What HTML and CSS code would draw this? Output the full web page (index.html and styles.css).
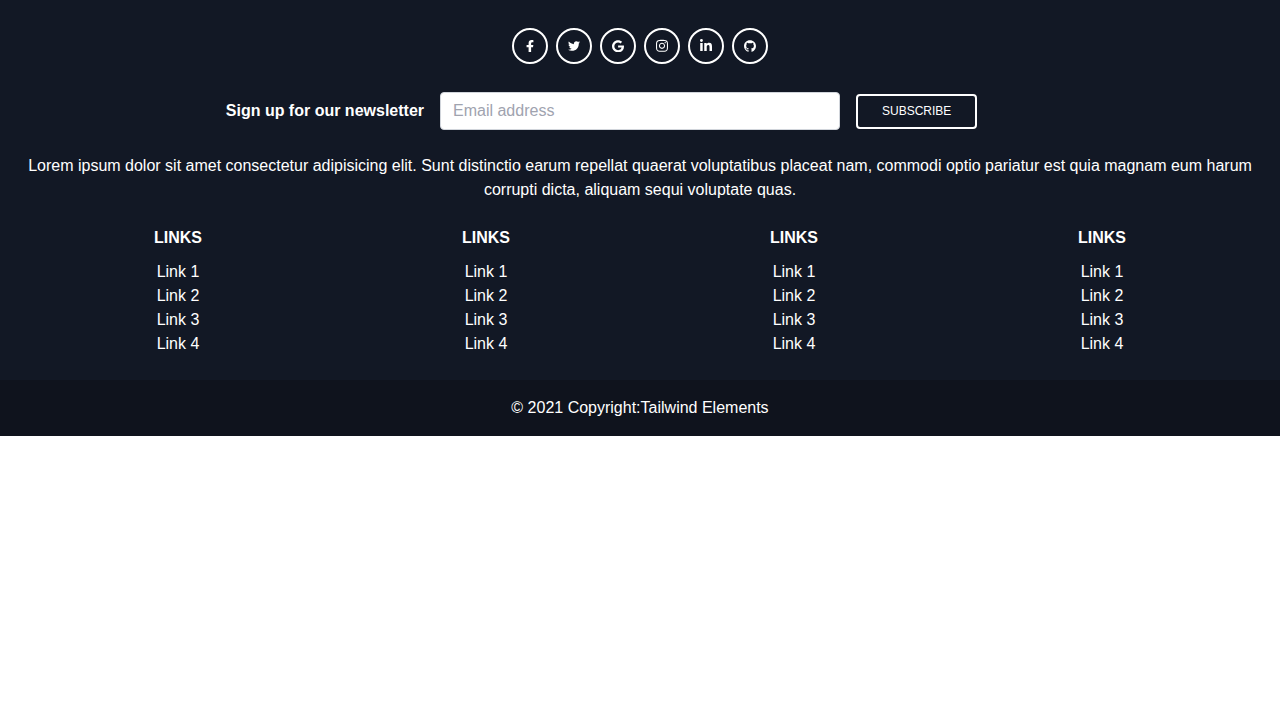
FILE: index.html
```html
<!DOCTYPE html>
<html lang="en">
<head>
<meta charset="utf-8">
<title>Footer</title>
<link rel="stylesheet" href="styles.css">
</head>
<body>
<footer class="footer">
  <div class="content">
    <div class="socials">
      <a class="social"><svg class="narrow" viewBox="0 0 320 512"><path d="M279.14 288l14.22-92.66h-88.91v-60.13c0-25.35 12.42-50.06 52.24-50.06h40.42V6.26S260.43 0 225.36 0c-73.22 0-121.08 44.38-121.08 124.72v70.62H22.89V288h81.39v224h100.17V288z"/></svg></a>
      <a class="social"><svg viewBox="0 0 512 512"><path d="M459.37 151.716c.325 4.548.325 9.097.325 13.645 0 138.72-105.583 298.558-298.558 298.558-59.452 0-114.68-17.219-161.137-47.106 8.447.974 16.568 1.299 25.34 1.299 49.055 0 94.213-16.568 130.274-44.832-46.132-.975-84.792-31.188-98.112-72.772 6.498.974 12.995 1.624 19.818 1.624 9.421 0 18.843-1.3 27.614-3.573-48.081-9.747-84.143-51.98-84.143-102.985v-1.299c13.969 7.797 30.214 12.67 47.431 13.319-28.264-18.843-46.781-51.005-46.781-87.391 0-19.492 5.197-37.36 14.294-52.954 51.655 63.675 129.3 105.258 216.365 109.807-1.624-7.797-2.599-15.918-2.599-24.04 0-57.828 46.782-104.934 104.934-104.934 30.213 0 57.502 12.67 76.67 33.137 23.715-4.548 46.456-13.32 66.599-25.34-7.798 24.366-24.366 44.833-46.132 57.827 21.117-2.273 41.584-8.122 60.426-16.243-14.292 20.791-32.161 39.308-52.628 54.253z"/></svg></a>
      <a class="social"><svg viewBox="0 0 488 512"><path d="M488 261.8C488 403.3 391.1 504 248 504 110.8 504 0 393.2 0 256S110.8 8 248 8c66.8 0 123 24.5 166.3 64.9l-67.5 64.9C258.5 52.6 94.3 116.6 94.3 256c0 86.5 69.1 156.6 153.7 156.6 98.2 0 135-70.4 140.8-106.9H248v-85.3h236.1c2.3 12.7 3.9 24.9 3.9 41.4z"/></svg></a>
      <a class="social"><svg viewBox="0 0 448 512"><path d="M224.1 141c-63.6 0-114.9 51.3-114.9 114.9s51.3 114.9 114.9 114.9S339 319.5 339 255.9 287.7 141 224.1 141zm0 189.6c-41.1 0-74.7-33.5-74.7-74.7s33.5-74.7 74.7-74.7 74.7 33.5 74.7 74.7-33.6 74.7-74.7 74.7zm146.4-194.3c0 14.9-12 26.8-26.8 26.8-14.9 0-26.8-12-26.8-26.8s12-26.8 26.8-26.8 26.8 12 26.8 26.8zm76.1 27.2c-1.7-35.9-9.9-67.7-36.2-93.9-26.2-26.2-58-34.4-93.9-36.2-37-2.1-147.9-2.1-184.9 0-35.8 1.7-67.6 9.9-93.9 36.1s-34.4 58-36.2 93.9c-2.1 37-2.1 147.9 0 184.9 1.7 35.9 9.9 67.7 36.2 93.9s58 34.4 93.9 36.2c37 2.1 147.9 2.1 184.9 0 35.9-1.7 67.7-9.9 93.9-36.2 26.2-26.2 34.4-58 36.2-93.9 2.1-37 2.1-147.8 0-184.8zM398.8 388c-7.8 19.6-22.9 34.7-42.6 42.6-29.5 11.7-99.5 9-132.1 9s-102.7 2.6-132.1-9c-19.6-7.8-34.7-22.9-42.6-42.6-11.7-29.5-9-99.5-9-132.1s-2.6-102.7 9-132.1c7.8-19.6 22.9-34.7 42.6-42.6 29.5-11.7 99.5-9 132.1-9s102.7-2.6 132.1 9c19.6 7.8 34.7 22.9 42.6 42.6 11.7 29.5 9 99.5 9 132.1s2.7 102.7-9 132.1z"/></svg></a>
      <a class="social"><svg viewBox="0 0 448 512"><path d="M100.28 448H7.4V148.9h92.88zM53.79 108.1C24.09 108.1 0 83.5 0 53.8a53.79 53.79 0 0 1 107.58 0c0 29.7-24.1 54.3-53.79 54.3zM447.9 448h-92.68V302.4c0-34.7-.7-79.2-48.29-79.2-48.29 0-55.69 37.7-55.69 76.7V448h-92.78V148.9h89.08v40.8h1.3c12.4-23.5 42.69-48.3 87.88-48.3 94 0 111.28 61.9 111.28 142.3V448z"/></svg></a>
      <a class="social"><svg viewBox="0 0 496 512"><path d="M165.900 397.400c0 2-2.300 3.600-5.200 3.600-3.300.3-5.600-1.300-5.600-3.600 0-2 2.300-3.600 5.200-3.600 3-.3 5.600 1.300 5.600 3.600zM244.800 8C106.100 8 0 113.300 0 252c0 110.900 69.800 205.800 169.500 239.200 12.800 2.300 17.300-5.600 17.300-12.100 0-6.200-.3-40.400-.3-61.400 0 0-70 15-84.700-29.800 0 0-11.400-29.100-27.800-36.600 0 0-22.900-15.700 1.600-15.400 0 0 24.900 2 38.600 25.800 21.900 38.600 58.600 27.500 72.900 20.900 2.300-16 8.800-27.100 16-33.700-55.900-6.200-112.300-14.300-112.300-110.500 0-27.500 7.600-41.300 23.600-58.900-2.600-6.500-11.100-33.300 2.600-67.900 20.900-6.500 69 27 69 27 20-5.600 41.500-8.500 62.800-8.500s42.800 2.900 62.800 8.500c0 0 48.100-33.600 69-27 13.700 34.700 5.200 61.400 2.600 67.900 16 17.700 25.800 31.500 25.800 58.900 0 96.500-58.900 104.200-114.800 110.500 9.200 7.900 17 22.900 17 46.400 0 33.700-.3 75.400-.3 83.600 0 6.500 4.600 14.400 17.300 12.100C428.200 457.800 496 362.900 496 252 496 113.300 383.500 8 244.800 8z"/></svg></a>
    </div>
    <form class="newsletter">
      <p class="label">Sign up for our newsletter</p>
      <input class="email" type="text" placeholder="Email address">
      <button class="subscribe" type="button">Subscribe</button>
    </form>
    <p class="blurb">Lorem ipsum dolor sit amet consectetur adipisicing elit. Sunt distinctio earum repellat quaerat voluptatibus placeat nam, commodi optio pariatur est quia magnam eum harum corrupti dicta, aliquam sequi voluptate quas.</p>
    <div class="columns">
      <div><h5 class="title">Links</h5><ul class="list"><li>Link 1</li><li>Link 2</li><li>Link 3</li><li>Link 4</li></ul></div>
      <div><h5 class="title">Links</h5><ul class="list"><li>Link 1</li><li>Link 2</li><li>Link 3</li><li>Link 4</li></ul></div>
      <div><h5 class="title">Links</h5><ul class="list"><li>Link 1</li><li>Link 2</li><li>Link 3</li><li>Link 4</li></ul></div>
      <div><h5 class="title">Links</h5><ul class="list"><li>Link 1</li><li>Link 2</li><li>Link 3</li><li>Link 4</li></ul></div>
    </div>
  </div>
  <div class="copyright">© 2021 Copyright:<a>Tailwind Elements</a></div>
</footer>
</body>
</html>
```
FILE: styles.css
```css
*, *::before, *::after { box-sizing: border-box; }
body { margin: 0; background: #fff; font-family: "Liberation Sans", Arial, sans-serif; font-size: 16px; line-height: 24px; }
p, h5, ul { margin: 0; padding: 0; }
.footer { background: #121825; color: #fff; text-align: center; }
.content { padding: 24px 24px 0; }
.socials { display: flex; justify-content: center; margin-bottom: 24px; }
.social { display: flex; align-items: center; justify-content: center; width: 36px; height: 36px; margin: 4px; border: 2px solid #fff; border-radius: 50%; }
.social svg { width: 12px; height: auto; fill: currentColor; }
.social .narrow { width: 8px; }
.newsletter { display: grid; grid-template-columns: 400px 400px 400px; gap: 16px; align-items: center; }
.label { font-weight: 700; text-align: right; }
.email { width: 100%; height: 38px; padding: 6px 12px; border: 1px solid #d1d5db; border-radius: 4px; background: #fff; font: inherit; }
.email::placeholder { color: #a0a3af; opacity: 1; }
.subscribe { justify-self: start; height: 35px; padding: 0 24px; border: 2px solid #fff; border-radius: 4px; background: transparent; color: #fff; font: 12px/15px "Liberation Sans", Arial, sans-serif; text-transform: uppercase; }
.blurb { margin: 24px 0; }
.columns { display: grid; grid-template-columns: repeat(4, 1fr); }
.columns > div { margin-bottom: 24px; }
.title { margin-bottom: 10px; font-size: 16px; text-transform: uppercase; }
.list { list-style: none; }
.copyright { padding: 16px; background: #0f131d; }
```
